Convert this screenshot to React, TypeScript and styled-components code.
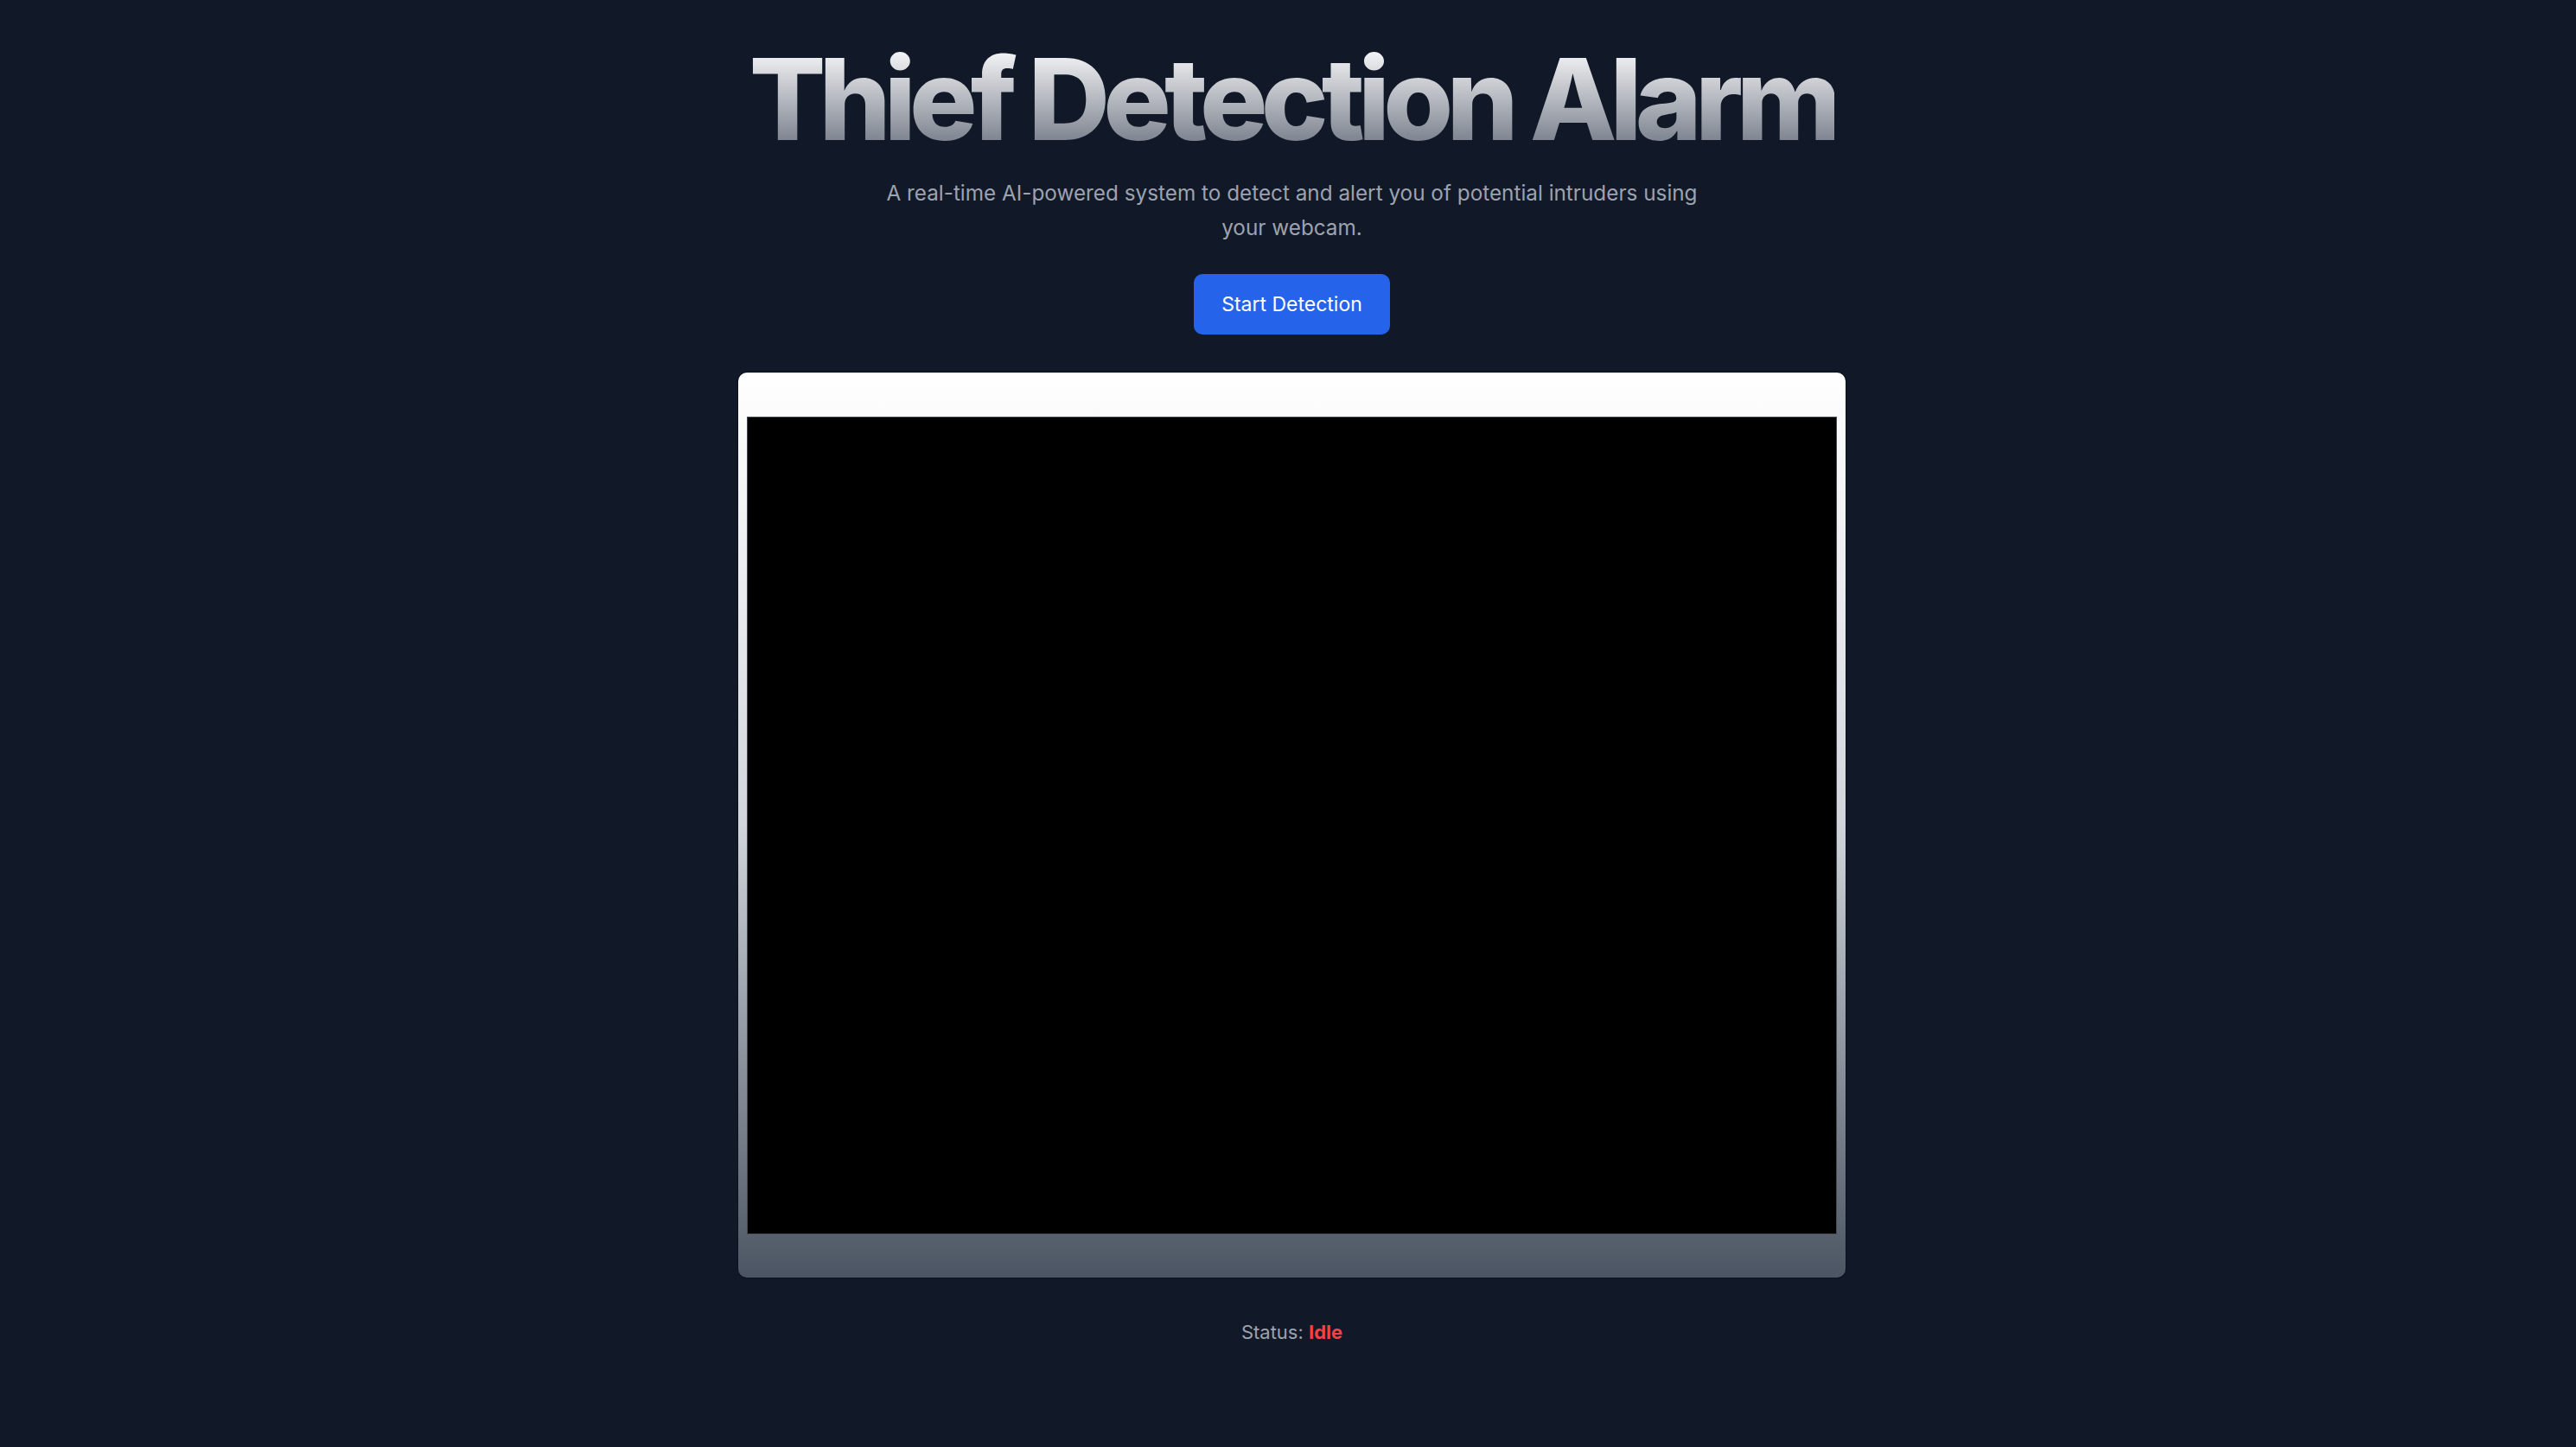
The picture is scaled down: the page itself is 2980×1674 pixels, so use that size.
import React from "react";
import styled, { createGlobalStyle } from "styled-components";

const GlobalStyle = createGlobalStyle`
  html, body {
    margin: 0;
    padding: 0;
    background: #111827;
  }
  body {
    font-family: Inter, "Noto Sans", "Liberation Sans", sans-serif;
    -webkit-font-smoothing: antialiased;
  }
  * { box-sizing: border-box; }
`;

const Page = styled.main`
  min-height: 100vh;
  background: #111827;
  display: flex;
  flex-direction: column;
  align-items: center;
  padding: 49px 0 80px 9px;
`;

const Title = styled.h1`
  margin: 0;
  font-size: 131px;
  font-weight: 800;
  line-height: 1;
  letter-spacing: -0.06em;
  background: linear-gradient(to bottom, #ffffff, #6b7280);
  -webkit-background-clip: text;
  background-clip: text;
  color: transparent;
  white-space: nowrap;
`;

const Subtitle = styled.p`
  margin: 23px 0 0;
  max-width: 960px;
  font-size: 24.3px;
  line-height: 40px;
  color: #9ca3af;
  text-align: center;
`;

const StartButton = styled.button`
  margin-top: 34px;
  height: 70px;
  padding: 0 32px;
  border: none;
  border-radius: 10px;
  background: #2563eb;
  color: #ffffff;
  font-family: inherit;
  font-size: 23px;
  font-weight: 400;
  cursor: pointer;
`;

const Card = styled.section`
  margin-top: 44px;
  width: 1281px;
  padding: 51px 10px 50px;
  border-radius: 10px;
  background: linear-gradient(to bottom, #ffffff 0%, #d1d5db 50%, #4b5563 100%);
  box-shadow: 0 0 0 1px rgba(0, 0, 0, 0.25);
`;

const VideoFrame = styled.div`
  width: 1261px;
  height: 946px;
  background: #000000;
  border: 1px solid #474a50;
`;

const Status = styled.p`
  margin: 47px 0 0;
  font-size: 22px;
  line-height: 32px;
  color: #9ca3af;
`;

const StatusValue = styled.span<{ $active?: boolean }>`
  font-weight: 700;
  color: ${(p) => (p.$active ? "#22c55e" : "#ef4444")};
`;

export default function App() {
  return (
    <>
      <GlobalStyle />
      <Page>
        <Title>Thief Detection Alarm</Title>
        <Subtitle>
          A real-time AI-powered system to detect and alert you of potential intruders using
          your webcam.
        </Subtitle>
        <StartButton type="button">Start Detection</StartButton>
        <Card>
          <VideoFrame />
        </Card>
        <Status>
          Status: <StatusValue>Idle</StatusValue>
        </Status>
      </Page>
    </>
  );
}
